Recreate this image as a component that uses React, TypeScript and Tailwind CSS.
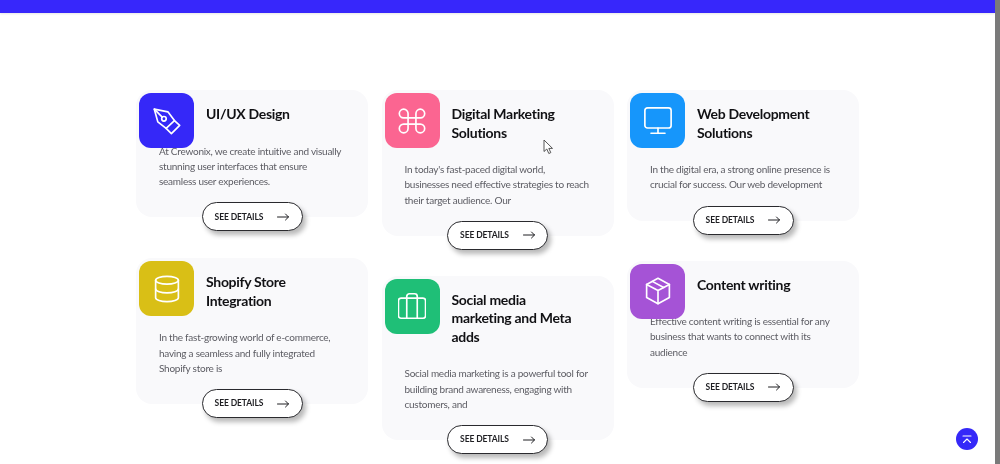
import React from "react";

const Icon = ({ children }: { children: React.ReactNode }) => (
  <svg width="28" height="28" viewBox="0 0 32 32" fill="none" stroke="#ffffff" strokeWidth="1.9" strokeLinecap="round" strokeLinejoin="round">
    {children}
  </svg>
);

const PenIcon = () => (
  <Icon>
    <path d="M1.5 2.5 L17 5.5 L24.5 15.5 L15 24.5 L5.5 17 Z" />
    <path d="M1.5 2.5 L10.5 11.5" />
    <circle cx="12.5" cy="13.5" r="2.6" />
    <path d="M24.5 15.5 L30.5 21 L21 30.5 L15 24.5" />
  </Icon>
);

const CommandIcon = () => (
  <Icon>
    <path d="M11.5 11.5 V7.5 A5 5 0 1 0 6.5 12.5 H25.5 A5 5 0 1 0 20.5 7.5 V24.5 A5 5 0 1 0 25.5 19.5 H6.5 A5 5 0 1 0 11.5 24.5 Z" />
  </Icon>
);

const MonitorIcon = () => (
  <Icon>
    <rect x="1" y="1" width="30" height="23" rx="3" />
    <path d="M16 24 V30 M8 30 H24" />
  </Icon>
);

const DbIcon = () => (
  <Icon>
    <ellipse cx="16" cy="6" rx="13" ry="4.5" />
    <path d="M3 6 V26 C3 28.5 9 30.5 16 30.5 C23 30.5 29 28.5 29 26 V6" />
    <path d="M3 16 C3 18.5 9 20.5 16 20.5 C23 20.5 29 18.5 29 16" />
  </Icon>
);

const CaseIcon = () => (
  <Icon>
    <rect x="0.5" y="7" width="31" height="23" rx="3" />
    <path d="M10 30 V5 A3 3 0 0 1 13 2 H19 A3 3 0 0 1 22 5 V30" />
  </Icon>
);

const BoxIcon = () => (
  <Icon>
    <path d="M16 1.5 L29 8.5 V23.5 L16 30.5 L3 23.5 V8.5 Z" />
    <path d="M3 8.5 L16 15.5 L29 8.5 M16 15.5 V30.5" />
    <path d="M9.5 5 L22.5 12" />
  </Icon>
);

const Arrow = () => (
  <svg width="12" height="8" viewBox="0 0 12 8" fill="none" stroke="#1f1f23" strokeWidth="1" strokeLinecap="round" strokeLinejoin="round">
    <path d="M0.5 4 H11.5 M8.5 1 L11.5 4 L8.5 7" />
  </svg>
);

type CardProps = {
  title: string[];
  body: string[];
  color: string;
  icon: React.ReactNode;
};

const Card = ({ title, body, color, icon }: CardProps) => (
  <div className="relative flex flex-col rounded-2xl bg-[#f9f9fb] pt-[15px]">
    <div className={`absolute left-[3px] top-[3px] flex h-[55px] w-[55px] items-center justify-center rounded-xl ${color}`}>
      {icon}
    </div>
    <h3 className="mb-[20px] pl-[70px] text-[14px] font-bold leading-[18.5px] tracking-[-0.3px] text-[#111114]">
      {title.map((t) => (
        <div key={t}>{t}</div>
      ))}
    </h3>
    <div className="pl-[23px] text-[10px] leading-[15.3px] tracking-[-0.25px] text-[#5c5c63]">
      {body.map((t) => (
        <div key={t} className="whitespace-nowrap">{t}</div>
      ))}
    </div>
    <div className="mb-[-14px] mt-[13px] flex justify-center">
      <div className="flex h-[29px] w-[101px] items-center justify-center gap-[14px] rounded-full border-[1.5px] border-[#2a2a2e] bg-white text-[8.5px] font-bold tracking-[-0.1px] text-[#1f1f23] shadow-[3px_4px_5px_rgba(0,0,0,0.28)]">
        SEE DETAILS
        <Arrow />
      </div>
    </div>
  </div>
);

export default function App() {
  return (
    <div className="relative flex h-[464px] w-[1000px] overflow-hidden bg-white font-['Lato',sans-serif] blur-[0.3px]">
      <div className="flex min-w-0 flex-1 flex-col">
        <div className="h-[13px] bg-[#3727fb] shadow-[0_1px_2px_rgba(0,0,0,0.1)]" />
        <div className="flex gap-[13.5px] pl-[136px] pt-[77px]">
          <div className="flex w-[232px] flex-col gap-[41px]">
            <Card
              title={["UI/UX Design"]}
              body={["At Crewonix, we create intuitive and visually", "stunning user interfaces that ensure", "seamless user experiences."]}
              color="bg-[#3528f8]"
              icon={<PenIcon />}
            />
            <Card
              title={["Shopify Store", "Integration"]}
              body={["In the fast-growing world of e-commerce,", "having a seamless and fully integrated", "Shopify store is"]}
              color="bg-[#d9bf16]"
              icon={<DbIcon />}
            />
          </div>
          <div className="flex w-[232px] flex-col gap-[40px]">
            <Card
              title={["Digital Marketing", "Solutions"]}
              body={["In today's fast-paced digital world,", "businesses need effective strategies to reach", "their target audience. Our"]}
              color="bg-[#fb6591]"
              icon={<CommandIcon />}
            />
            <Card
              title={["Social media", "marketing and Meta", "adds"]}
              body={["Social media marketing is a powerful tool for", "building brand awareness, engaging with", "customers, and"]}
              color="bg-[#1fbf77]"
              icon={<CaseIcon />}
            />
          </div>
          <div className="flex w-[232px] flex-col gap-[40px]">
            <Card
              title={["Web Development", "Solutions"]}
              body={["In the digital era, a strong online presence is", "crucial for success. Our web development"]}
              color="bg-[#1696fb]"
              icon={<MonitorIcon />}
            />
            <Card
              title={["Content writing"]}
              body={["Effective content writing is essential for any", "business that wants to connect with its", "audience"]}
              color="bg-[#a553d6]"
              icon={<BoxIcon />}
            />
          </div>
        </div>
      </div>
      <div className="w-[5px] shrink-0 bg-[#7a7a7a]" />

      <svg className="absolute left-[543px] top-[139px]" width="11" height="16" viewBox="0 0 11 16" fill="#ffffff" stroke="#444444" strokeWidth="0.9" strokeLinejoin="round">
        <path d="M1 1 V12.5 L3.8 10 L5.8 14.5 L7.8 13.6 L5.8 9.4 H9.5 Z" />
      </svg>

      <div className="absolute left-[956px] top-[428px] flex h-[22px] w-[22px] items-center justify-center rounded-full bg-[#3528f8]">
        <svg width="10" height="9" viewBox="0 0 10 9" fill="none" stroke="#ffffff" strokeWidth="1.1" strokeLinecap="round" strokeLinejoin="round">
          <path d="M1 1 H9 M1.5 7.5 L5 4 L8.5 7.5" />
        </svg>
      </div>
    </div>
  );
}
